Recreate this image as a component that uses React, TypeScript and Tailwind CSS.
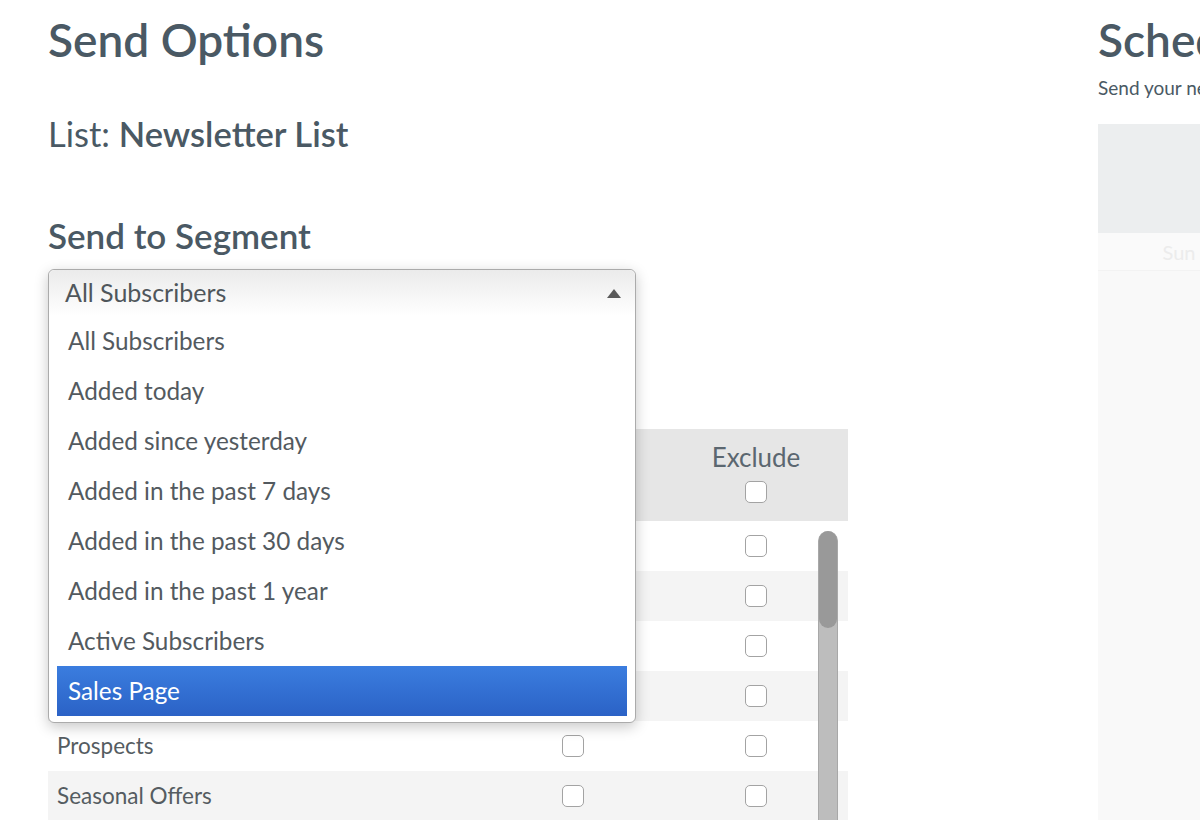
const segments = [
  'All Subscribers',
  'Added today',
  'Added since yesterday',
  'Added in the past 7 days',
  'Added in the past 30 days',
  'Added in the past 1 year',
  'Active Subscribers',
  'Sales Page',
]

const lists = ['Customers', 'Webinar Attendees', 'Free Trial', 'Sales Page', 'Prospects', 'Seasonal Offers']

const days = ['Sun', 'Mon', 'Tue', 'Wed', 'Thu', 'Fri', 'Sat']

function Box() {
  return <span className="block h-[22px] w-[22px] rounded-[5px] border-[1.5px] border-[#a3a3a3] bg-white" />
}

export default function App() {
  return (
    <div className="h-[820px] w-[1200px] overflow-hidden bg-white font-[Lato,sans-serif] text-[#4a5964]">
      <div className="flex gap-[250px] pl-[48px] pt-[16px]">
        {/* left: send options */}
        <div className="w-[800px] shrink-0">
          <h1 className="text-[46px] font-semibold leading-[48px]">Send Options</h1>
          <p className="mt-[52px] text-[34.5px] leading-[36px]">
            List: <span className="font-semibold">Newsletter List</span>
          </p>
          <h2 className="mt-[65px] text-[35px] font-semibold leading-[36px]">Send to Segment</h2>

          {/* open select */}
          <div className="relative mt-[16px] h-[47px] w-[588px]">
            <div className="absolute left-0 top-0 z-10 w-full rounded-[6px] border border-[#ababab] bg-white shadow-[0_4px_14px_rgba(0,0,0,0.22)]">
              <div className="flex h-[46px] items-center justify-between rounded-t-[6px] bg-gradient-to-b from-[#ebebeb] to-white pl-[16px] pr-[13px]">
                <span className="text-[25px] text-[#4f565b]">All Subscribers</span>
                <svg width="16" height="11" viewBox="0 0 16 11">
                  <polygon points="8,1 15,10 1,10" fill="#5a5a5a" />
                </svg>
              </div>
              <ul className="px-[8px] pb-[6px]">
                {segments.map((s) => (
                  <li
                    key={s}
                    className={
                      s === 'Sales Page'
                        ? 'flex h-[50px] items-center bg-gradient-to-b from-[#3b7ddf] to-[#2b62c6] pl-[11px] text-[24.3px] text-white'
                        : 'flex h-[50px] items-center pl-[11px] text-[24.3px] text-[#535a5f]'
                    }
                  >
                    {s}
                  </li>
                ))}
              </ul>
            </div>
          </div>

          {/* lists table */}
          <div className="mt-[113px]">
            <div className="grid h-[92px] grid-cols-[434px_182px_184px] bg-[#e6e6e6] text-[26px] leading-[28px] text-[#5b6770]">
              <div className="pl-[9px] pt-[14px]">List</div>
              <div className="flex flex-col items-center gap-[10px] pt-[14px]">
                <span>Include</span>
                <Box />
              </div>
              <div className="flex flex-col items-center gap-[10px] pt-[14px]">
                <span>Exclude</span>
                <Box />
              </div>
            </div>
            <div className="relative">
              {lists.map((l, i) => (
                <div
                  key={l}
                  className={`grid h-[50px] grid-cols-[434px_182px_184px] items-center text-[22.5px] text-[#555c61] ${
                    i % 2 === 1 ? 'bg-[#f4f4f4]' : 'bg-white'
                  }`}
                >
                  <span className="pl-[9px]">{l}</span>
                  <div className="flex justify-center">
                    <Box />
                  </div>
                  <div className="flex justify-center">
                    <Box />
                  </div>
                </div>
              ))}
              {/* scrollbar */}
              <div className="absolute bottom-0 right-[10px] top-[10px] w-[20px] rounded-t-full border-x border-[#a8a8a8] bg-[#bdbdbd]">
                <div className="h-[97px] rounded-full bg-[#999999]" />
              </div>
            </div>
          </div>
        </div>

        {/* right: schedule (faded calendar) */}
        <div className="w-[1134px] shrink-0">
          <h1 className="text-[46px] font-semibold leading-[48px]">Schedule</h1>
          <p className="mt-[12px] text-[19px] leading-[24px]">Send your newsletter at a specific time</p>
          <div className="mt-[24px] h-[109px] bg-[#eceeef]" />
          <div className="grid h-[37px] grid-cols-7 items-center bg-[#fafafa] text-center text-[20px] text-[#ececec]">
            {days.map((d) => (
              <span key={d}>{d}</span>
            ))}
          </div>
          <div className="h-[600px] border-t border-[#f3f3f3] bg-[#f9f9f9]" />
        </div>
      </div>
    </div>
  )
}
